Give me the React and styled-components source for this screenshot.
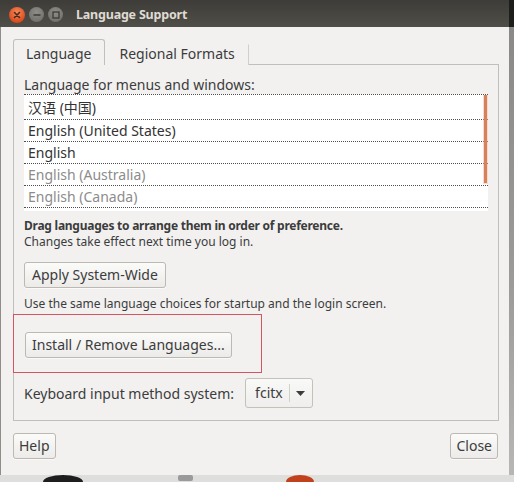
import React from "react";
import styled, { createGlobalStyle } from "styled-components";

const GlobalStyle = createGlobalStyle`
  html, body {
    margin: 0;
    padding: 0;
    background: #d8d8d6;
  }
  body {
    font-family: "Noto Sans", "Open Sans", sans-serif;
    color: #3c3c3c;
  }
`;

const languages = [
  { name: "汉语 (中国)", cjk: true },
  { name: "English (United States)" },
  { name: "English" },
  { name: "English (Australia)", muted: true },
  { name: "English (Canada)", muted: true },
];

const App = () => {
  return (
    <Screen>
      <GlobalStyle />
      <Top>
        <Window>
          <TitleBar>
            <Controls>
              <CloseDot>
                <svg width="8" height="8" viewBox="0 0 8 8">
                  <path d="M1.5 1.5L6.5 6.5M6.5 1.5L1.5 6.5" stroke="#4a2a1c" strokeWidth="1.6" strokeLinecap="round" />
                </svg>
              </CloseDot>
              <GreyDot>
                <svg width="8" height="8" viewBox="0 0 8 8">
                  <path d="M0.5 4H7.5" stroke="#3c3b37" strokeWidth="1.5" />
                </svg>
              </GreyDot>
              <GreyDot>
                <svg width="8" height="8" viewBox="0 0 8 8">
                  <rect x="1" y="1" width="6" height="6" fill="none" stroke="#3c3b37" strokeWidth="1.3" />
                </svg>
              </GreyDot>
            </Controls>
            <Title>Language Support</Title>
          </TitleBar>

          <Body>
            <Tabs>
              <Tab active>Language</Tab>
              <Tab>Regional Formats</Tab>
            </Tabs>
            <Pane>
              <Heading>Language for menus and windows:</Heading>
              <List>
                {languages.map((l, i) => (
                  <Row key={l.name} first={i === 0} muted={l.muted} cjk={l.cjk}>
                    {l.name}
                  </Row>
                ))}
                <Row />
                <Scroll />
              </List>

              <Note bold>Drag languages to arrange them in order of preference.</Note>
              <Note>Changes take effect next time you log in.</Note>

              <ApplyButton>Apply System-Wide</ApplyButton>
              <Hint>Use the same language choices for startup and the login screen.</Hint>

              <Highlight>
                <Button>Install / Remove Languages...</Button>
              </Highlight>

              <InputRow>
                <span>Keyboard input method system:</span>
                <Combo>
                  <ComboValue>fcitx</ComboValue>
                  <ComboArrow>
                    <svg width="9" height="5" viewBox="0 0 9 5">
                      <path d="M0 0H9L4.5 5Z" fill="#3c3c3c" />
                    </svg>
                  </ComboArrow>
                </Combo>
              </InputRow>
            </Pane>

            <Footer>
              <Button small>Help</Button>
              <Button small>Close</Button>
            </Footer>
          </Body>
        </Window>
        <SideStrip />
      </Top>
      <Desk>
        <Blob left={43} width={40} color="#1e1e1e" />
        <Blob left={178} width={15} color="#9a9a9a" small />
        <Blob left={286} width={28} color="#c2411c" />
      </Desk>
    </Screen>
  );
};

export default App;

// Styling
const Screen = styled.div`
  width: 514px;
  height: 482px;
  display: flex;
  flex-direction: column;
  overflow: hidden;
`;

const Top = styled.div`
  display: flex;
  height: 475px;
`;

const Window = styled.div`
  width: 509px;
  display: flex;
  flex-direction: column;
  background: #f2f1f0;
  border-left: 1px solid #8e8d8a;
  box-sizing: border-box;
`;

const SideStrip = styled.div`
  flex: 1;
  background: linear-gradient(to bottom, #1d1d1c 0, #1d1d1c 27px, #8a8987 27px, #9c9b99 60%, #b7b6b4 100%);
`;

const Desk = styled.div`
  position: relative;
  flex: 1;
  background: #dededd;
`;

const Blob = styled.div`
  position: absolute;
  top: 0;
  left: ${(p) => p.left}px;
  width: ${(p) => p.width}px;
  height: ${(p) => (p.small ? 6 : 14)}px;
  border-radius: ${(p) => (p.small ? "2px" : "50% 50% 0 0")};
  background: ${(p) => p.color};
`;

const TitleBar = styled.div`
  height: 27px;
  display: flex;
  align-items: center;
  background: linear-gradient(to bottom, #3d3c38, #504e48);
  margin-left: -1px;
`;

const Controls = styled.div`
  display: flex;
  align-items: center;
  gap: 4px;
  padding-left: 9px;
  width: 67px;
  padding-top: 2px;
`;

const CloseDot = styled.div`
  width: 16px;
  height: 16px;
  border-radius: 50%;
  background: radial-gradient(circle at 50% 35%, #f58a5c, #dc4c1c 70%, #b83c12);
  display: flex;
  align-items: center;
  justify-content: center;
`;

const GreyDot = styled.div`
  width: 15px;
  height: 15px;
  border-radius: 50%;
  background: radial-gradient(circle at 50% 35%, #8e8d88, #73726d 75%, #5e5d59);
  display: flex;
  align-items: center;
  justify-content: center;
`;

const Title = styled.div`
  font-weight: 700;
  font-size: 12.5px;
  letter-spacing: -0.2px;
  color: #dfdbd2;
  padding-top: 2px;
`;

const Body = styled.div`
  flex: 1;
  display: flex;
  flex-direction: column;
  padding: 12px 10px 16px 12px;
`;

const Tabs = styled.div`
  display: flex;
  align-items: flex-end;
  position: relative;
  z-index: 1;
  margin-bottom: -1px;
`;

const Tab = styled.div`
  font-size: 14px;
  line-height: 18px;
  box-sizing: border-box;
  height: ${(p) => (p.active ? 26 : 21)}px;
  padding: ${(p) => (p.active ? "5px 13px 3px 12px" : "0 13px 3px 13px")};
  background: #f2f1f0;
  border: 1px solid ${(p) => (p.active ? "#c2bfba" : "transparent")};
  border-right-color: ${(p) => (p.active ? "#c2bfba" : "#d2cfca")};
  border-bottom: none;
  border-radius: ${(p) => (p.active ? "3px 3px 0 0" : "0")};
  color: #3c3c3c;
`;

const Pane = styled.div`
  border: 1px solid #c2bfba;
  padding: 11px 10px 12px 10px;
  display: flex;
  flex-direction: column;
  align-items: flex-start;
`;

const Heading = styled.div`
  font-size: 14px;
  line-height: 18px;
`;

const List = styled.div`
  position: relative;
  align-self: stretch;
  height: 117px;
  overflow: hidden;
  background: #ffffff;
  border-top: 1px dotted #4e4e4e;
  box-sizing: border-box;
`;

const Row = styled.div`
  height: ${(p) => (p.first ? 25 : 22)}px;
  box-sizing: border-box;
  border-bottom: 1px dotted #4e4e4e;
  padding-left: 4px;
  display: flex;
  align-items: center;
  font-size: 14px;
  font-family: ${(p) =>
    p.cjk
      ? '"Noto Sans", "Noto Sans CJK SC", sans-serif'
      : '"Noto Sans", "Open Sans", sans-serif'};
  color: ${(p) => (p.muted ? "#8c8c8c" : "#333333")};
`;

const Scroll = styled.div`
  position: absolute;
  top: 0;
  right: 1px;
  width: 3px;
  height: 88px;
  background: #d6835c;
  box-shadow: 0 0 0 1px rgba(240, 175, 140, 0.45);
`;

const Note = styled.div`
  font-size: 12px;
  line-height: 16px;
  font-weight: ${(p) => (p.bold ? 700 : 400)};
  letter-spacing: ${(p) => (p.bold ? "-0.25px" : "0")};
  margin-top: ${(p) => (p.bold ? 7 : 0)}px;
`;

const Button = styled.button`
  font-family: "Noto Sans", "Open Sans", sans-serif;
  font-size: 14px;
  color: #3c3c3c;
  height: 26px;
  padding: 0 ${(p) => (p.small ? 5 : 6)}px;
  border: 1px solid #bcb8b2;
  border-radius: 3px;
  background: linear-gradient(to bottom, #fbfbfa, #ecebe9);
  box-shadow: 0 1px 0 rgba(255, 255, 255, 0.6);
  line-height: 22px;
`;

const ApplyButton = styled(Button)`
  margin-top: 12px;
  padding: 0 7px;
`;

const Hint = styled.div`
  font-size: 12px;
  line-height: 15px;
  margin-top: 8px;
`;

const Highlight = styled.div`
  margin: 3px 0 0 -11px;
  width: 249px;
  height: 59px;
  box-sizing: border-box;
  border: 1px solid #d35561;
  padding: 17px 0 0 11px;
`;

const InputRow = styled.div`
  margin-top: 5px;
  display: flex;
  align-items: center;
  gap: 11px;
  font-size: 14px;
`;

const Combo = styled.div`
  height: 30px;
  box-sizing: border-box;
  display: flex;
  align-items: center;
  border: 1px solid #c4c0ba;
  border-radius: 3px;
  background: linear-gradient(to bottom, #f9f9f8, #efeeec);
`;

const ComboValue = styled.div`
  padding: 0 6px 0 9px;
  line-height: 18px;
  border-right: 1px solid #d3d0cb;
`;

const ComboArrow = styled.div`
  width: 22px;
  display: flex;
  justify-content: center;
  padding-top: 1px;
`;

const Footer = styled.div`
  margin-top: 12px;
  display: flex;
  justify-content: space-between;
  padding-right: 1px;
`;
